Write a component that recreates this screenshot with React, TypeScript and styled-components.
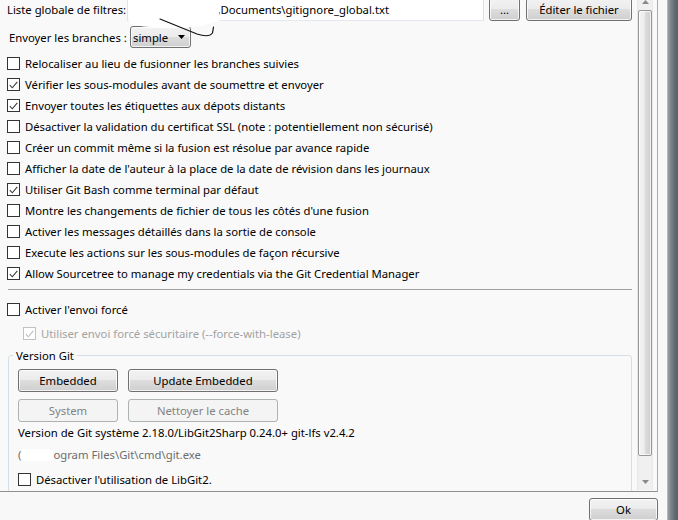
import React from "react";
import styled, { createGlobalStyle } from "styled-components";

const Global = createGlobalStyle`
  html, body { margin: 0; padding: 0; background: #f8f8f8; }
  body {
    font-family: "Noto Sans", "Open Sans", "DejaVu Sans", sans-serif;
    font-size: 11.3px;
    color: #000;
  }
  #root { width: 678px; height: 520px; overflow: hidden; }
`;

const Screen = styled.div`
  display: flex;
  width: 678px;
  height: 520px;
  overflow: hidden;
  background: #f8f8f8;
`;

const DialogBody = styled.div`
  flex: 1;
  display: flex;
  flex-direction: column;
  min-width: 0;
`;

const WindowFrame = styled.div`
  width: 11px;
  flex: none;
  background: linear-gradient(to right, #c9ccd0 0px, #9ba0a6 1px, #7c8289 4px, #636970 8px, #586067 11px);
`;

const Panel = styled.div`
  width: 658px;
  height: 494px;
  box-sizing: border-box;
  border-right: 1px solid #a9a9a9;
  border-bottom: 1px solid #8e8f8f;
  display: flex;
  align-items: flex-start;
  background: #f9f9f9;
`;

const ScrollPane = styled.div`
  position: relative;
  width: 637px;
  height: 491px;
  flex: none;
  overflow: hidden;
`;

const ScrollContent = styled.div`
  margin-top: -3px;
  padding-left: 7px;
  display: flex;
  flex-direction: column;
`;

const FilterRow = styled.div`
  display: flex;
  align-items: flex-end;
  height: 24px;
`;

const FieldLabel = styled.span<{ $w: number; $pad?: number }>`
  width: ${(p) => p.$w}px;
  padding-left: ${(p) => p.$pad ?? 0}px;
  flex: none;
  align-self: center;
  white-space: nowrap;
  box-sizing: border-box;
`;

const PathField = styled.div`
  width: 357px;
  height: 24px;
  box-sizing: border-box;
  flex: none;
  margin-right: 5px;
  border: 1px solid;
  border-color: #abadb3 #dbdfe6 #e3e9ef #e2e3ea;
  background: #fff;
  display: flex;
  align-items: center;
  padding-left: 8px;
  white-space: nowrap;
  overflow: hidden;
`;

const Hidden = styled.span<{ $w: number }>`
  display: inline-block;
  width: ${(p) => p.$w}px;
  height: 12px;
  background: #fff;
  border-radius: 4px;
`;

const Btn = styled.button<{ $w: number; $ml?: number }>`
  box-sizing: border-box;
  width: ${(p) => p.$w}px;
  height: 23px;
  flex: none;
  margin-left: ${(p) => p.$ml ?? 0}px;
  padding: 0;
  font: inherit;
  color: #000;
  border: 1px solid #707070;
  border-radius: 3px;
  background: linear-gradient(#f2f2f2 0%, #ebebeb 50%, #dddddd 50%, #cfcfcf 100%);
  box-shadow: inset 0 0 0 1px rgba(255, 255, 255, 0.75);
  white-space: nowrap;
  &:disabled {
    background: #f4f4f4;
    border-color: #adb2b5;
    color: #838383;
    box-shadow: none;
  }
`;

const BranchRow = styled.div`
  display: flex;
  align-items: center;
  height: 22px;
  margin-top: 5px;
`;

const Combo = styled.div`
  box-sizing: border-box;
  width: 61px;
  height: 22px;
  border: 1px solid #707070;
  border-radius: 3px;
  background: linear-gradient(#f2f2f2 0%, #ebebeb 50%, #dddddd 50%, #cfcfcf 100%);
  box-shadow: inset 0 0 0 1px rgba(255, 255, 255, 0.75);
  display: flex;
  align-items: center;
  justify-content: space-between;
  padding: 0 5px 0 2px;
`;

const CheckList = styled.div`
  display: flex;
  flex-direction: column;
  margin-top: 5px;
`;

const CheckRow = styled.div<{ $indent?: number; $disabled?: boolean; $mt?: number }>`
  display: flex;
  align-items: center;
  gap: 5px;
  height: 21px;
  margin-top: ${(p) => p.$mt ?? 0}px;
  padding-left: ${(p) => p.$indent ?? 0}px;
  color: ${(p) => (p.$disabled ? "#a2a2a2" : "#000")};
  white-space: nowrap;
`;

const Box = styled.span<{ $disabled?: boolean }>`
  box-sizing: border-box;
  width: 13px;
  height: 13px;
  flex: none;
  border: 1px solid ${(p) => (p.$disabled ? "#c2c2c2" : "#333")};
  background: #fff;
  display: flex;
  align-items: center;
  justify-content: center;
`;

const Separator = styled.div`
  height: 1px;
  background: #a0a0a0;
  margin: 5px 5px 0 1px;
`;

const Group = styled.fieldset`
  box-sizing: border-box;
  width: 624px;
  margin: 3px 0 0 1px;
  padding: 0 0 20px 9px;
  border: 1px solid #d5dfe5;
  border-radius: 3px;
  min-inline-size: 0;
`;

const GroupTitle = styled.legend`
  padding: 0 3px;
  margin-left: -5px;
  line-height: 17px;
`;

const ButtonGrid = styled.div`
  display: grid;
  grid-template-columns: 100px 150px;
  column-gap: 10px;
  row-gap: 7px;
  margin-top: 5px;
`;

const InfoLine = styled.div<{ $muted?: boolean; $mt: number }>`
  line-height: 20px;
  margin-top: ${(p) => p.$mt}px;
  color: ${(p) => (p.$muted ? "#6d6d6d" : "#000")};
  white-space: nowrap;
  display: flex;
  align-items: center;
`;

const Overlay = styled.svg`
  position: absolute;
  left: 0;
  top: 0;
  pointer-events: none;
`;

const ScrollBar = styled.div`
  width: 16px;
  height: 497px;
  flex: none;
  margin-top: -7px;
  background: linear-gradient(to right, #e6e6e6, #f0f0f0 2px, #f0f0f0 14px, #e8e8e8);
  display: flex;
  flex-direction: column;
  align-items: center;
`;

const ArrowBox = styled.div`
  height: 17px;
  width: 16px;
  display: flex;
  align-items: center;
  justify-content: center;
`;

const Thumb = styled.div`
  box-sizing: border-box;
  width: 14px;
  height: 446px;
  border: 1px solid #979797;
  border-radius: 2px;
  background: linear-gradient(to right, #f4f4f4 0%, #ececec 45%, #dadada 55%, #d0d0d0 100%);
  box-shadow: inset 0 0 0 1px rgba(255, 255, 255, 0.7);
`;

const TrackGap = styled.div`
  height: 17px;
`;

const Footer = styled.div`
  display: flex;
  justify-content: flex-end;
  padding: 6px 9px 0 0;
`;

const Check = ({ disabled }: { disabled?: boolean }) => (
  <svg width="9" height="8" viewBox="0 0 9 8">
    <polyline
      points="0.8,4.2 3.3,6.8 8.3,0.8"
      fill="none"
      stroke={disabled ? "#bdbdbd" : "#3a3a3a"}
      strokeWidth="1.1"
    />
  </svg>
);

const CheckItem = ({
  label,
  checked,
  disabled,
  indent,
  mt,
}: {
  label: string;
  checked?: boolean;
  disabled?: boolean;
  indent?: number;
  mt?: number;
}) => (
  <CheckRow $indent={indent} $disabled={disabled} $mt={mt}>
    <Box $disabled={disabled}>{checked && <Check disabled={disabled} />}</Box>
    <span>{label}</span>
  </CheckRow>
);

const Tri = ({ up, color = "#8a8a8a" }: { up?: boolean; color?: string }) => (
  <svg width="7" height="4" viewBox="0 0 7 4">
    <polygon points={up ? "0,4 7,4 3.5,0" : "0,0 7,0 3.5,4"} fill={color} />
  </svg>
);

const options: [string, boolean][] = [
  ["Relocaliser au lieu de fusionner les branches suivies", false],
  ["Vérifier les sous-modules avant de soumettre et envoyer", true],
  ["Envoyer toutes les étiquettes aux dépots distants", true],
  ["Désactiver la validation du certificat SSL (note : potentiellement non sécurisé)", false],
  ["Créer un commit même si la fusion est résolue par avance rapide", false],
  ["Afficher la date de l'auteur à la place de la date de révision dans les journaux", false],
  ["Utiliser Git Bash comme terminal par défaut", true],
  ["Montre les changements de fichier de tous les côtés d'une fusion", false],
  ["Activer les messages détaillés dans la sortie de console", false],
  ["Execute les actions sur les sous-modules de façon récursive", false],
  ["Allow Sourcetree to manage my credentials via the Git Credential Manager", true],
];

export default function App() {
  return (
    <Screen>
      <Global />
      <DialogBody>
        <Panel>
          <ScrollPane>
            <ScrollContent>
              <FilterRow>
                <FieldLabel $w={120}>Liste globale de filtres:</FieldLabel>
                <PathField>
                  <span>(</span>
                  <Hidden $w={78} />
                  <span>,Documents\gitignore_global.txt</span>
                </PathField>
                <Btn $w={31}>...</Btn>
                <Btn $w={106} $ml={6}>
                  Éditer le fichier
                </Btn>
              </FilterRow>

              <BranchRow>
                <FieldLabel $w={123} $pad={2}>
                  Envoyer les branches :
                </FieldLabel>
                <Combo>
                  <span>simple</span>
                  <Tri color="#000" />
                </Combo>
              </BranchRow>

              <CheckList>
                {options.map(([label, checked]) => (
                  <CheckItem key={label} label={label} checked={checked} />
                ))}
              </CheckList>

              <Separator />

              <CheckItem label="Activer l'envoi forcé" mt={9} />
              <CheckItem
                label="Utiliser envoi forcé sécuritaire (--force-with-lease)"
                checked
                disabled
                indent={16}
                mt={3}
              />

              <Group>
                <GroupTitle>Version Git</GroupTitle>
                <ButtonGrid>
                  <Btn $w={100}>Embedded</Btn>
                  <Btn $w={150}>Update Embedded</Btn>
                  <Btn $w={100} disabled>
                    System
                  </Btn>
                  <Btn $w={150} disabled>
                    Nettoyer le cache
                  </Btn>
                </ButtonGrid>
                <InfoLine $mt={1}>
                  Version de Git système 2.18.0/LibGit2Sharp 0.24.0+ git-lfs v2.4.2
                </InfoLine>
                <InfoLine $muted $mt={2}>
                  <span>(</span>
                  <Hidden $w={32} />
                  <span>ogram Files\Git\cmd\git.exe</span>
                </InfoLine>
                <CheckItem label="Désactiver l'utilisation de LibGit2." mt={4} />
              </Group>
            </ScrollContent>

            <Overlay width="637" height="60" viewBox="0 0 637 60">
              <path
                d="M129 0 H219 V21 Q210 24 200 26 Q175 30 150 27 Q136 26 129 23 Z"
                fill="#ffffff"
              />
              <path
                d="M160 19 L197 34 Q209 38 212.5 33 L213.5 27"
                fill="none"
                stroke="#111"
                strokeWidth="1.2"
                strokeLinecap="round"
              />
            </Overlay>
          </ScrollPane>

          <ScrollBar>
            <ArrowBox>
              <Tri up />
            </ArrowBox>
            <Thumb />
            <TrackGap />
            <ArrowBox>
              <Tri />
            </ArrowBox>
          </ScrollBar>
        </Panel>

        <Footer>
          <Btn $w={69}>Ok</Btn>
        </Footer>
      </DialogBody>
      <WindowFrame />
    </Screen>
  );
}
